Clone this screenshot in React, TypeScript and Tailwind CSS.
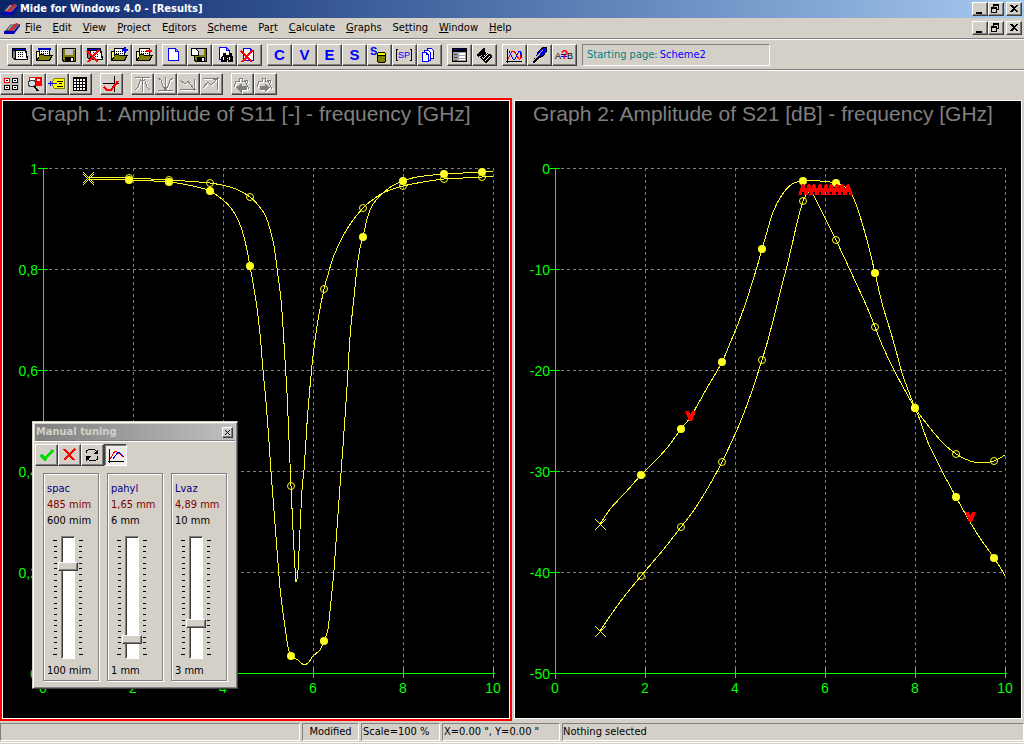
import React, { useState } from "react";
import clsx from "clsx";

const UI_FONT = "font-['DejaVu_Sans_Condensed','Noto_Sans',sans-serif]";

type Point = [number, number];

/* ---------- chart data (plot pixels, origin in the top left of the plot) ---------- */

const s11Filled: Point[] = [
  [85, 78], [126, 79], [166, 81], [190, 85], [207, 90], [220, 99], [228, 107], [236, 121],
  [242, 140], [247, 165], [253, 200], [257, 233], [260, 269], [263, 301], [266, 341], [268, 371],
  [272, 423], [276, 475], [278, 496], [282, 526], [285, 546], [288, 555], [295, 559], [301, 564],
  [306, 561], [310, 555], [317, 549], [321, 540], [325, 528], [328, 500], [331, 469], [334, 427],
  [337, 385], [340, 345], [344, 286], [347, 236], [351, 196], [354, 167], [357, 147], [360, 136],
  [364, 118], [368, 107], [373, 99], [380, 92], [389, 85], [400, 80], [414, 76], [441, 73],
  [460, 72], [479, 71], [490, 71],
];

const s11Open: Point[] = [
  [85, 76], [126, 77], [166, 79], [207, 82], [227, 86], [237, 90], [247, 96], [255, 104],
  [263, 116], [270, 140], [274, 167], [278, 199], [280, 226], [282, 259], [284, 292], [286, 339],
  [288, 385], [290, 429], [292, 467], [293, 481], [295, 469], [297, 429], [299, 389], [301, 369],
  [303, 339], [305, 309], [309, 264], [311, 247], [315, 219], [321, 188], [325, 174], [330, 157],
  [339, 137], [348, 122], [360, 107], [368, 100], [380, 92], [390, 88], [400, 85], [420, 81],
  [441, 78], [460, 77], [479, 76], [490, 76],
];

const s21Filled: Point[] = [
  [85, 423], [96, 407], [110, 392], [126, 374], [139, 361], [152, 347], [166, 328], [175, 317],
  [183, 303], [192, 287], [207, 261], [216, 240], [221, 228], [230, 204], [237, 182], [242, 166],
  [247, 148], [252, 131], [258, 111], [267, 94], [277, 83], [288, 80], [305, 80], [321, 82],
  [330, 86], [337, 94], [343, 109], [352, 139], [360, 172], [367, 202], [376, 232], [383, 257],
  [388, 275], [400, 307], [405, 319], [412, 339], [418, 352], [428, 372], [441, 396], [455, 421],
  [465, 437], [479, 457], [485, 466], [490, 475],
];

const s21Open: Point[] = [
  [85, 530], [105, 501], [126, 475], [148, 449], [166, 426], [177, 412], [188, 395], [198, 378],
  [207, 361], [217, 340], [227, 317], [237, 290], [247, 259], [253, 239], [260, 212], [267, 184],
  [272, 165], [277, 144], [282, 122], [288, 100], [292, 93], [296, 89], [299, 95], [310, 117],
  [321, 139], [335, 169], [352, 206], [360, 226], [368, 246], [380, 271], [392, 293], [400, 307],
  [415, 327], [428, 342], [441, 353], [455, 360], [467, 362], [479, 360], [490, 354],
];

const MARKER_X = [126, 166, 207, 247, 288, 321, 360, 400, 441, 479];

const toPath = (pts: Point[]) =>
  pts
    .map(([x, y], i) => {
      if (i === 0) return `M${x} ${y}`;
      const a = pts[i - 2] ?? pts[i - 1];
      const b = pts[i - 1];
      const d = pts[i + 1] ?? pts[i];
      const c1 = [b[0] + (x - a[0]) / 6, b[1] + (y - a[1]) / 6];
      const c2 = [x - (d[0] - b[0]) / 6, y - (d[1] - b[1]) / 6];
      return `C${c1.join(" ")} ${c2.join(" ")} ${x} ${y}`;
    })
    .join("");

interface ChartProps {
  title: string;
  titleX: number;
  yLabels: string[];
  filled: Point[];
  open: Point[];
  active?: boolean;
  goals?: React.ReactNode;
}

const Chart = ({ title, titleX, yLabels, filled, open, active, goals }: ChartProps) => {
  const markers = (pts: Point[]) => pts.filter(([x]) => MARKER_X.includes(x));
  return (
    <section
      aria-label={title}
      className={clsx("min-h-0 min-w-0 border-2", active ? "border-[#ff0000]" : "border-[#d4d0c8]")}
    >
      <div className="h-full border border-white bg-black">
        <svg viewBox="0 0 506 617" className="block h-full w-full font-['Liberation_Sans',sans-serif]">
          <text x={titleX} y="20" fontSize="21" fill="#808080">
            {title}
          </text>
          <g stroke="#808080" strokeDasharray="3 3" shapeRendering="crispEdges">
            {[0, 1, 2, 3, 4].map((i) => (
              <path key={i} d={`M46 ${67.5 + i * 101}H490`} />
            ))}
            {[1, 2, 3, 4, 5].map((i) => (
              <path key={i} d={`M${40.5 + i * 90} 67V567`} />
            ))}
          </g>
          <g stroke="#00ff00" fill="none" shapeRendering="crispEdges">
            <path d="M40.5 67V578" />
            <path d="M35 572.5H492" />
            {yLabels.map((_, i) => (
              <path key={i} d={`M35 ${67.5 + i * 101}H45`} />
            ))}
            {[1, 2, 3, 4, 5].map((i) => (
              <path key={i} d={`M${40.5 + i * 90} 567V577`} />
            ))}
          </g>
          <g fill="#00ff00" fontSize="14">
            {yLabels.map((label, i) => (
              <text key={label} x="35" y={73 + i * 101} textAnchor="end">
                {label}
              </text>
            ))}
            {[0, 2, 4, 6, 8, 10].map((v) => (
              <text key={v} x={40 + v * 45} y="592" textAnchor="middle">
                {v}
              </text>
            ))}
          </g>
          <g fill="none" stroke="#ffff20" shapeRendering="crispEdges">
            <path d={toPath(filled)} />
            <path d={toPath(open)} />
          </g>
          {[filled[0], open[0]].map(([x, y]) => (
            <path
              key={y}
              d={`M${x - 5} ${y - 5}l11 11M${x + 6} ${y - 5}l-11 11`}
              stroke="#ffff20"
              shapeRendering="crispEdges"
            />
          ))}
          {markers(open).map(([x, y]) => (
            <circle key={x} cx={x} cy={y} r="3.5" fill="none" stroke="#ffff20" />
          ))}
          {markers(filled).map(([x, y]) => (
            <circle key={x} cx={x} cy={y} r="4" fill="#ffff20" />
          ))}
          {goals}
        </svg>
      </div>
    </section>
  );
};

const s21Goals = (
  <g fill="#ff0000" shapeRendering="crispEdges">
    {[288, 294, 299, 305, 311, 316, 322, 327, 333].map((x) => (
      <path key={x} d={`M${x - 1} 83h2l4 11h-4v-3h-2v3h-4z`} />
    ))}
    <path d="M170 310h4l1 3h1l1 -3h4l-4 10h-3z" />
    <path d="M450 411h4l1 3h1l1 -3h4l-4 10h-3z" />
  </g>
);

/* ---------- icons ---------- */

const Art = ({ w = 23, children }: { w?: number; children: React.ReactNode }) => (
  <svg
    width={w}
    height="20"
    viewBox={`0 0 ${w} 20`}
    fill="none"
    shapeRendering="crispEdges"
    className="block shrink-0"
    aria-hidden="true"
  >
    {children}
  </svg>
);

const Dots = ({ x, y, cols, rows }: { x: number; y: number; cols: number; rows: number }) => (
  <path
    stroke="#000"
    strokeDasharray="1 1"
    d={Array.from({ length: rows }, (_, i) => `M${x} ${y + i * 2 + 0.5}h${cols * 2}`).join("")}
  />
);

const SheetArt = () => (
  <>
    <path d="M4 3h14v3l1 1v4l1 1v3H6v-1H5v-1H4z" fill="#000" />
    <path d="M5 4h12v1H5z" fill="#0000ff" />
    <path d="M5 6h2v7H5z" fill="#808080" />
    <path d="M8 6h9v2l1 1v4l1 1H8z" fill="#fff" />
    <Dots x={10} y={7} cols={3} rows={3} />
  </>
);

const FolderArt = ({ blue }: { blue?: boolean }) => (
  <>
    <path d="M6 3h11v8H6z" fill="#000" />
    <path d="M7 4h9v6H7z" fill="#fff" />
    {blue && <path d="M5 3h13v2H5z" fill="#0000c0" />}
    <Dots x={8} y={6} cols={4} rows={2} />
    <path d="M3 6h4v10H3z" fill="#000" />
    <path d="M4 7h2v8H4z" fill="#ffff80" />
    <path d="M7 9h3l1 1h9l-3 6H3z" fill="#000" />
    <path d="M7 10h3l1 1h7l-2 4H5z" fill="#808000" />
  </>
);

const RedCross = ({ x = 4 }: { x?: number }) => (
  <path d={`M${x} 6l11 11M${x + 12} 5l-11 12`} stroke="#ff0000" strokeWidth="2" />
);

const FloppyArt = () => (
  <>
    <path d="M4 3h14v14H5l-1-1z" fill="#000" />
    <path d="M5 4h12v12H6l-1-1z" fill="#808000" />
    <path d="M7 4h8v6H7z" fill="#c0c0c0" />
    <path d="M7 12h9v4H7z" fill="#000" />
    <path d="M13 13h2v3h-2z" fill="#fff" />
    <path d="M16 4h1v1h-1z" fill="#fff" />
  </>
);

const PageArt = ({ x = 5, y = 3 }: { x?: number; y?: number }) => (
  <path
    d={`M${x + 0.5} ${y + 0.5}h7l3 3v9h-10zM${x + 7.5} ${y + 0.5}v3h3`}
    fill="#fff"
    stroke="#0000ff"
  />
);

const Letter = ({ children }: { children: string }) => (
  <span className="font-['Liberation_Sans',sans-serif] text-[15px] leading-5 font-bold text-[#0000ff]">
    {children}
  </span>
);

const AppIcon = () => (
  <svg width="18" height="14" viewBox="0 0 18 14" className="block shrink-0" aria-hidden="true">
    <path d="M1 10L7 3h9l-6 7z" fill="#404048" />
    <path d="M3 9l5-6h2L5 9z" fill="#a8a8a8" />
    <path d="M5 10l7-8h2l-6 8z" fill="#ff2020" />
    <path d="M8 10l6-7h2l-6 7z" fill="#707078" />
    <path d="M0 10h10l6-7v2l-6 8H0z" fill="#0000c0" />
  </svg>
);

interface Tool {
  name: string;
  art: React.ReactNode;
  disabled?: boolean;
}

const mainTools: Tool[][] = [
  [
    { name: "New", art: <Art><SheetArt /></Art> },
    { name: "Open", art: <Art><FolderArt blue /></Art> },
    { name: "Save", art: <Art><FloppyArt /></Art> },
    { name: "Delete", art: <Art><SheetArt /><RedCross /></Art> },
    { name: "Add to project", art: <Art><FolderArt /><path d="M14 4h6v2h-6zM16 2h2v6h-2z" fill="#0000ff" /></Art> },
    { name: "Remove from project", art: <Art><FolderArt /><path d="M13 5h6v2h-6z" fill="#ff0000" /></Art> },
  ],
  [
    { name: "New page", art: <Art><PageArt /></Art> },
    {
      name: "Save page",
      art: (
        <Art>
          <path d="M6 3h13v14H7l-1-1z" fill="#000" />
          <path d="M7 4h11v12H8l-1-1z" fill="#808000" />
          <path d="M9 4h7v6H9z" fill="#c0c0c0" />
          <path d="M9 12h8v4H9z" fill="#000" />
          <path d="M14 13h2v3h-2z" fill="#fff" />
          <path d="M3.500 3.500h4l3 3v4h-7z" fill="#fff" stroke="#000" />
        </Art>
      ),
    },
    {
      name: "Find page",
      art: (
        <Art>
          <PageArt x={6} y={2} />
          <path d="M10 8h3v2h3V8h3v3l1 1v5h-5v-4h-1v4H8v-4l2-3z" fill="#000" />
          <path d="M10 12h1v3h-1zM16 12h1v3h-1z" fill="#fff" />
        </Art>
      ),
    },
    { name: "Delete page", art: <Art><PageArt /><RedCross x={3} /></Art> },
  ],
  [
    { name: "Circuit", art: <Letter>C</Letter> },
    { name: "Variables", art: <Letter>V</Letter> },
    { name: "Equations", art: <Letter>E</Letter> },
    { name: "Substrate", art: <Letter>S</Letter> },
    {
      name: "Substrate library",
      art: (
        <Art>
          <text x="2" y="10" fontSize="11" className="font-['Liberation_Sans',sans-serif] font-bold" fill="#0000ff">
            S
          </text>
          <path d="M9 8h1V7h7v1h1v9h-1v1h-7v-1H9z" fill="#000" />
          <path d="M10 11h7v6h-7z" fill="#808000" />
          <path d="M10 8h7v2h-7z" fill="#ffff00" />
        </Art>
      ),
    },
    {
      name: "S-parameters",
      art: (
        <Art>
          <path d="M5 4.500H3.500v11H5M17 4.500h1.500v11H17" stroke="#000" />
          <text x="5" y="13" fontSize="9" className="font-['Liberation_Sans',sans-serif]" fill="#0000ff">
            SP
          </text>
        </Art>
      ),
    },
    {
      name: "Copy pages",
      art: (
        <Art>
          <g fill="#fff" stroke="#0000ff">
            <path d="M9.500 3.500h4l2 2v8h-6z" />
            <path d="M6.500 5.500h4l2 2v8h-6z" />
            <path d="M4.500 7.500h4l2 2v7h-6zM8.500 7.500v2h2" />
          </g>
        </Art>
      ),
    },
  ],
  [
    {
      name: "Report",
      art: (
        <Art>
          <path d="M4 3h15v14H4z" fill="#000" />
          <path d="M5 4h13v1H5z" fill="#000080" />
          <path d="M5 7h13v9H5z" fill="#a0a0a0" />
          <path d="M6 9h3v1H6zM6 12h3v1H6zM6 15h3v1H6z" fill="#404040" />
          <path d="M11 8h6v2h-6zM11 11h6v2h-6zM11 14h6v1h-6z" fill="#fff" />
        </Art>
      ),
    },
    {
      name: "Layout",
      art: (
        <Art>
          <path d="M3 10l8-7 1 1v3l7 3v2l-6 6-6-5 2-3-4 2z" fill="#000" />
          <path
            d="M13 8l4 4M11 10l4 4M9 12l4 4M15 9l-5 5M17 11l-4 4"
            stroke="#fff"
            strokeDasharray="1 1"
          />
        </Art>
      ),
    },
  ],
  [
    {
      name: "Show graphs",
      art: (
        <Art>
          <path d="M4.500 4v14M3 16.500h16" stroke="#000" />
          <path d="M5 14l4-8h2l5 8h1l2-7" stroke="#ff0000" />
          <path d="M6 6l4 8h2l4-8h1l2 7" stroke="#0000ff" />
        </Art>
      ),
    },
    {
      name: "Edit marks",
      art: (
        <Art>
          <path d="M4 17l4-6 2-5 5-4h4v4l-3 5-6 3-4 4z" fill="#000" />
          <path d="M9 11l2-5 5-3h2v3l-3 4-5 2z" fill="#0000ff" />
          <path d="M4 17l11-12" stroke="#c0c0c0" />
        </Art>
      ),
    },
    {
      name: "Compare",
      art: (
        <Art>
          <g className="font-['Liberation_Sans',sans-serif]">
            <text x="2" y="14" fontSize="9" fill="#000">A</text>
            <text x="14" y="14" fontSize="9" fill="#000">B</text>
            <path d="M8 9h6v1H8zM8 11h6v1H8z" fill="#0000ff" />
            <text x="8" y="14" fontSize="12" fontWeight="bold" fill="#ff0000">?</text>
          </g>
        </Art>
      ),
    },
  ],
];

/* Greyed icons are drawn twice: a white copy one pixel down and right */
const Embossed = ({ children }: { children: React.ReactNode }) => (
  <Art w={21}>
    <g stroke="#fff" transform="translate(1 1)">{children}</g>
    <g stroke="#808080">{children}</g>
  </Art>
);

const graphTools: Tool[][] = [
  [
    {
      name: "Tile graphs",
      art: (
        <Art w={21}>
          <path d="M2 3h16v14H2z" fill="#c0c0c0" />
          <g fill="#fff" stroke="#000">
            <path d="M3.500 4.500h5v4h-5z" stroke="#ff0000" />
            <path d="M11.500 4.500h5v4h-5zM3.500 11.500h5v4h-5zM11.500 11.500h5v4h-5z" />
          </g>
          <path d="M5 6.500h2M13 6.500h2M5 13.500h2M13 13.500h2" stroke="#000" />
        </Art>
      ),
    },
    {
      name: "Zoom graph",
      art: (
        <Art w={21}>
          <path d="M5 3h13v9H5z" fill="#ff0000" />
          <path d="M6 4h5v4H6zM13 5h3v2h-3z" fill="#fff" />
          <circle cx="8" cy="9.500" r="3.500" fill="#c8e0e8" stroke="#404040" />
          <path d="M10 12l4 5" stroke="#000" strokeWidth="2" />
        </Art>
      ),
    },
    {
      name: "Mark value",
      art: (
        <Art w={21}>
          <path d="M4.500 9.500l3-5h10v10h-10z" fill="#ffff00" stroke="#808000" />
          <path d="M1 9.500h9M3.500 7v5" stroke="#0000ff" />
          <path d="M10 7l6 1M10 12h6M12 10l3-1" stroke="#000" />
        </Art>
      ),
    },
    {
      name: "Table",
      art: (
        <Art w={21}>
          <path d="M3 3h14v14H3z" fill="#000" />
          <path
            d="M4 6h12M4 9h12M4 12h12M4 15h12"
            stroke="#fff"
            strokeWidth="2"
            strokeDasharray="2 1"
          />
        </Art>
      ),
    },
  ],
  [
    {
      name: "Axis range",
      art: (
        <Art w={21}>
          <path d="M13.500 2v16M2 9.500h16" stroke="#000" />
          <path d="M3 13l3 3h4l7-9" stroke="#ff0000" strokeWidth="2" />
        </Art>
      ),
    },
  ],
  [
    { name: "Go to maximum", disabled: true, art: <Embossed><path d="M3 3.500h15M10.500 4v14M8 6h5M3 16l3-3 2-6 1-2M18 16l-3-3-2-6-1-2" fill="none" /></Embossed> },
    { name: "Go to minimum", disabled: true, art: <Embossed><path d="M3 16.500h15M10.500 3v13M8 13h5M3 4l3 2 2 6 2 4M18 4l-3 2-2 6-2 4" fill="none" /></Embossed> },
    { name: "Next minimum", disabled: true, art: <Embossed><path d="M2 6l5 4 3-3 6 8M2 15.500h16M16.500 5v12M12 15h4v-4" fill="none" /></Embossed> },
    { name: "Next maximum", disabled: true, art: <Embossed><path d="M2 14l5-6 3 3 6-6M2 4.500h16M16.500 3v13M12 5h4v4" fill="none" /></Embossed> },
  ],
  [
    { name: "Previous point", disabled: true, art: <Embossed><path d="M2 13l2-6h3V4h3v3h3l4 8M3 7h2M12 6h3v3" fill="none" /><path d="M5 13.500l4-3v2h5v3H9v2z" fill="#808080" /></Embossed> },
    { name: "Next point", disabled: true, art: <Embossed><path d="M2 13l2-6h3V4h3v3h3l4 8M3 7h2M12 6h3v3" fill="none" /><path d="M14 13.500l-4-3v2H5v3h5v2z" fill="#808080" /></Embossed> },
  ],
];

/* ---------- window parts ---------- */

const RAISED =
  "border border-t-white border-l-white border-r-[#404040] border-b-[#404040] bg-[#d4d0c8] shadow-[inset_-1px_-1px_0_#808080]";
const SUNKEN = "border border-t-[#808080] border-l-[#808080] border-r-white border-b-white";

const Toolbar = ({ label, groups, small, children }: {
  label: string;
  groups: Tool[][];
  small?: boolean;
  children?: React.ReactNode;
}) => (
  <div
    role="toolbar"
    aria-label={label}
    className={clsx("flex shrink-0", small ? "gap-2 pt-0.5 pb-[3px]" : "gap-[5px] pt-1 pb-[3px] pl-[7px]")}
  >
    {groups.map((group, i) => (
      <div key={i} className="flex">
        {group.map((tool) => (
          <button
            key={tool.name}
            type="button"
            title={tool.name}
            aria-label={tool.name}
            disabled={tool.disabled}
            className={clsx(RAISED, "flex h-[22px] items-center justify-center overflow-hidden", small ? "w-[23px]" : "w-[25px]")}
          >
            {tool.art}
          </button>
        ))}
      </div>
    ))}
    {children}
  </div>
);

const Etched = () => <div className="h-0.5 shrink-0 border-t border-b border-t-[#808080] border-b-white" />;

const CaptionButtons = () => (
  <div className="flex">
    <button type="button" aria-label="Minimize" className={clsx(RAISED, "h-3.5 w-4")}>
      <svg width="14" height="12" className="block" shapeRendering="crispEdges"><path d="M3 9h6v2H3z" /></svg>
    </button>
    <button type="button" aria-label="Restore" className={clsx(RAISED, "h-3.5 w-4")}>
      <svg width="14" height="12" className="block" shapeRendering="crispEdges">
        <path d="M4 1h6v6H8V6h1V3H5v1H4zM2 4h6v6H2zM3 6v3h4V6z" fillRule="evenodd" />
      </svg>
    </button>
    <button type="button" aria-label="Close" className={clsx(RAISED, "ml-0.5 h-3.5 w-4")}>
      <svg width="14" height="12" className="block" shapeRendering="crispEdges">
        <path d="M3 2h2l2 2 2-2h2v1L8 5.500 11 8v1H9L7 7 5 9H3V8l3-2.500L3 3z" />
      </svg>
    </button>
  </div>
);

/* text before the hot key, the hot key, text after it */
const menus = [
  ["", "F", "ile"], ["", "E", "dit"], ["", "V", "iew"], ["", "P", "roject"], ["E", "d", "itors"],
  ["", "S", "cheme"], ["Pa", "r", "t"], ["", "C", "alculate"], ["", "G", "raphs"],
  ["Se", "t", "ting"], ["", "W", "indow"], ["", "H", "elp"],
];

const params = [
  { name: "spac", unit: "mim", min: 100, max: 600, value: 485 },
  { name: "pahyl", unit: "mm", min: 1, max: 6, value: 1.65 },
  { name: "Lvaz", unit: "mm", min: 3, max: 10, value: 4.89 },
];

const Ticks = ({ side }: { side: "left" | "right" }) => (
  <div
    className={clsx(
      "flex h-[115px] w-1 flex-col justify-between",
      side === "left" ? "items-end" : "items-start",
    )}
  >
    {Array.from({ length: 21 }, (_, i) => (
      <span
        key={i}
        className={clsx("h-px bg-black", i === 0 || i === 20 ? "w-1" : "w-[3px]")}
      />
    ))}
  </div>
);

const ParamSlider = ({ param }: { param: (typeof params)[number] }) => {
  const [value, setValue] = useState(param.value);
  return (
    <div className="w-14 shrink-0 border border-[#808080] px-[3px] pt-[3px] pb-px leading-4 whitespace-nowrap shadow-[1px_1px_0_#fff,inset_1px_1px_0_#fff]">
      <label htmlFor={param.name} className="block pt-1 text-[#000080]">
        {param.name}
      </label>
      <div className="text-[#800000]">
        {String(value).replace(".", ",")} {param.unit}
      </div>
      <div>
        {param.max} {param.unit}
      </div>
      <div className="mt-[7px] flex h-[123px] items-center gap-px pl-1.5">
        <Ticks side="left" />
        <div className="grid justify-items-center">
          <div className="col-start-1 row-start-1 h-[123px] w-3.5 border border-t-[#808080] border-r-white border-b-white border-l-[#808080] bg-white shadow-[inset_1px_1px_0_#404040]" />
          <input
            id={param.name}
            type="range"
            min={param.min}
            max={param.max}
            step={param.unit === "mim" ? 1 : 0.01}
            value={value}
            onChange={(e) => setValue(Number(e.target.value))}
            className="col-start-1 row-start-1 h-[123px] w-5 appearance-none bg-transparent [direction:rtl] [writing-mode:vertical-lr] [&::-webkit-slider-thumb]:h-[9px] [&::-webkit-slider-thumb]:w-5 [&::-webkit-slider-thumb]:appearance-none [&::-webkit-slider-thumb]:border [&::-webkit-slider-thumb]:border-t-white [&::-webkit-slider-thumb]:border-r-[#404040] [&::-webkit-slider-thumb]:border-b-[#404040] [&::-webkit-slider-thumb]:border-l-white [&::-webkit-slider-thumb]:bg-[#d4d0c8] [&::-webkit-slider-thumb]:shadow-[inset_-1px_-1px_0_#808080]"
          />
        </div>
        <Ticks side="right" />
      </div>
      <div className="mt-1">
        {param.min} {param.unit}
      </div>
    </div>
  );
};

const tuningTools: Tool[] = [
  { name: "Accept", art: <Art w={21}><path d="M5 10l4 4 8-9" stroke="#00e000" strokeWidth="3" /></Art> },
  { name: "Cancel", art: <Art w={21}><path d="M5 4l10 11M16 4L5 15" stroke="#ff0000" strokeWidth="2" /></Art> },
  {
    name: "Reset",
    art: (
      <Art w={21}>
        <path d="M4.500 8V6l2-1.500h6l2 2M15.500 11v3l-2 1.500h-6l-2-2" stroke="#000" />
        <path d="M16 4v5h-5zM4 16v-5h5z" fill="#000" />
      </Art>
    ),
  },
  {
    name: "Live update",
    art: (
      <Art w={21}>
        <path d="M4.500 4v14M3 16.500h16" stroke="#000" />
        <path d="M5 14l5-8h1l8 6" stroke="#ff0000" />
        <path d="M8 14l5-7h1l5 5" stroke="#0000ff" />
      </Art>
    ),
  },
];

const TuningDialog = () => {
  const [live, setLive] = useState(true);
  return (
    <div
      role="dialog"
      aria-label="Manual tuning"
      className="absolute top-[323px] left-8 w-[206px] border border-[#d4d0c8] border-r-[#404040] border-b-[#404040] bg-[#d4d0c8] p-0.5 shadow-[inset_1px_1px_0_#fff,inset_-1px_-1px_0_#808080]"
    >
      <div className="flex h-4 items-center justify-between bg-linear-to-r from-[#808080] to-[#c0c0c0] pr-0.5 pl-px font-bold text-[#d4d0c8]">
        Manual tuning
        <button type="button" aria-label="Close" className={clsx(RAISED, "h-[11px] w-[11px]")}>
          <svg width="9" height="9" className="block" shapeRendering="crispEdges">
            <path d="M2 2l5 5M7 2L2 7" stroke="#000" />
          </svg>
        </button>
      </div>
      <Etched />
      <div className="flex pt-0.5">
        {tuningTools.map((tool) => {
          const pressed = tool.name === "Live update" && live;
          return (
            <button
              key={tool.name}
              type="button"
              aria-label={tool.name}
              aria-pressed={tool.name === "Live update" ? live : undefined}
              onClick={() => tool.name === "Live update" && setLive(!live)}
              className={clsx(
                "h-[22px] w-[23px]",
                pressed
                  ? "border border-t-[#404040] border-r-white border-b-white border-l-[#404040] bg-[#eeece8] shadow-[inset_1px_1px_0_#808080]"
                  : RAISED,
              )}
            >
              {tool.art}
            </button>
          );
        })}
      </div>
      <div className="flex gap-2 px-2 pt-[7px] pb-[5px]">
        {params.map((param) => (
          <ParamSlider key={param.name} param={param} />
        ))}
      </div>
    </div>
  );
};

const App = () => (
  <div className={clsx("flex h-screen flex-col bg-[#d4d0c8] text-[11px] text-black", UI_FONT)}>
    <header className="flex h-[18px] shrink-0 items-center justify-between bg-linear-to-r from-[#0a246a] to-[#a6caf0] pr-0.5 pl-0.5 text-white">
      <h1 className="flex items-center text-[11px] font-bold">
        <AppIcon />
        Mide for Windows 4.0 - [Results]
      </h1>
      <CaptionButtons />
    </header>
    <nav className="flex h-5 shrink-0 items-center justify-between pr-0.5 pl-1">
      <div className="flex items-center">
        <AppIcon />
        <div role="menubar" className="flex gap-[11px] pl-[3px]">
          {menus.map(([before, key, after]) => (
            <button key={before + key + after} type="button" role="menuitem">
              {before}
              <span className="underline">{key}</span>
              {after}
            </button>
          ))}
        </div>
      </div>
      <CaptionButtons />
    </nav>
    <Etched />
    <Toolbar label="Main" groups={mainTools}>
      <div className={clsx(SUNKEN, "flex h-[22px] w-[188px] items-center gap-0.5 px-1")}>
        <span className="text-[#008080]">Starting page:</span>
        <span className="text-[#0000ff]">Scheme2</span>
      </div>
    </Toolbar>
    <Etched />
    <Toolbar label="Graph" groups={graphTools} small />
    <main className="relative grid min-h-0 flex-1 grid-cols-2 grid-rows-1">
      <Chart
        title="Graph 1: Amplitude of S11 [-] - frequency [GHz]"
        titleX={28}
        yLabels={["1", "0,8", "0,6", "0,4", "0,2", "0"]}
        filled={s11Filled}
        open={s11Open}
        active
      />
      <Chart
        title="Graph 2: Amplitude of S21 [dB] - frequency [GHz]"
        titleX={18}
        yLabels={["0", "-10", "-20", "-30", "-40", "-50"]}
        filled={s21Filled}
        open={s21Open}
        goals={s21Goals}
      />
      <TuningDialog />
    </main>
    <footer className="shrink-0 border-b border-[#d4d0c8] pt-0.5">
      <div className="flex h-[18px] gap-0.5 leading-4 whitespace-nowrap">
        <div className={clsx(SUNKEN, "w-[300px]")} />
        <div className={clsx(SUNKEN, "w-[57px] text-center")}>Modified</div>
        <div className={clsx(SUNKEN, "w-[79px] pl-px")}>Scale=100 %</div>
        <div className={clsx(SUNKEN, "w-[118px] pl-px")}>X=0.00 ", Y=0.00 "</div>
        <div className={clsx(SUNKEN, "flex-1")}>Nothing selected</div>
      </div>
      <div className="mt-px h-px bg-white" />
    </footer>
  </div>
);

export default App;
